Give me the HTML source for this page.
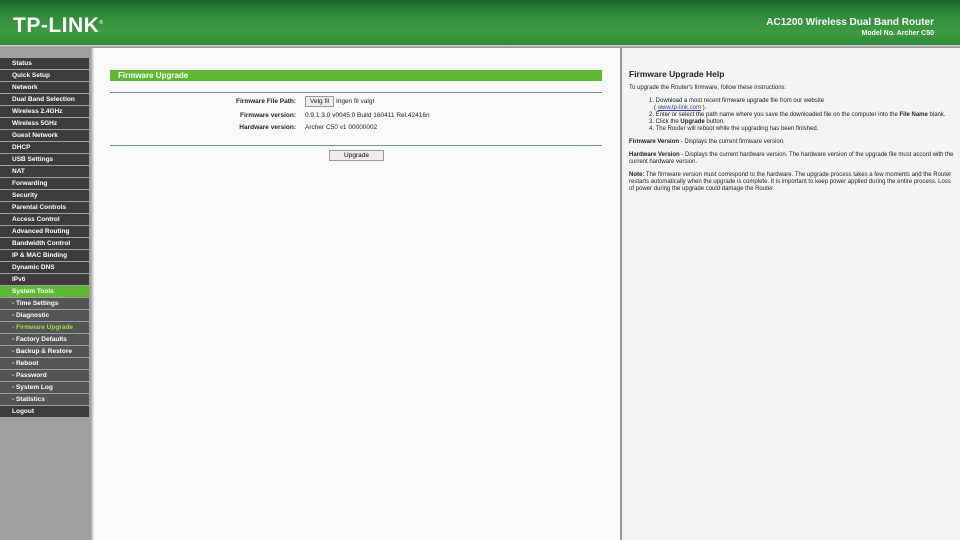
<!DOCTYPE html>
<html><head><meta charset="utf-8"><style>
*{margin:0;padding:0;box-sizing:border-box}
body{width:960px;height:540px;overflow:hidden;font-family:"Liberation Sans",Arial,sans-serif;background:#fff;position:relative}
#hd{position:absolute;left:0;top:0;width:960px;height:45px;background:linear-gradient(180deg,#1a6630 0%,#2f8a3a 30%,#3d9a40 70%,#2f8a38 100%)}
#hd .logo{position:absolute;left:13px;top:14px;color:#fff;font-weight:bold;font-size:21px;letter-spacing:0.5px}
#hd .t1{position:absolute;right:26px;top:17px;color:#fff;font-weight:bold;font-size:10px}
#hd .t2{position:absolute;right:26px;top:30px;color:#fff;font-weight:bold;font-size:7px}
#ln{position:absolute;left:0;top:45px;width:960px;height:3px;background:linear-gradient(#ddd,#888)}
#sb{position:absolute;left:0;top:48px;width:91px;height:492px;background:#a0a0a0}
#sb .m{position:absolute;left:0;width:89px;height:11px;background:#3c3c3c;color:#fff;font-size:6.5px;font-weight:bold;line-height:11px;padding-left:12px;white-space:nowrap}
#sb .s{background:#555}
#sb .a{background:#5fb832}
#sb .g{color:#a6d94a}
#vb1{position:absolute;left:91px;top:48px;width:3px;height:492px;background:linear-gradient(90deg,#aaa,#eee)}
#main{position:absolute;left:94px;top:48px;width:526px;height:492px;background:#fafafa}
#vb2{position:absolute;left:620px;top:48px;width:2px;height:492px;background:#999}
#help{position:absolute;left:622px;top:48px;width:338px;height:492px;background:#f2f5f1;font-size:6px;color:#222;padding:21px 6px 0 7px;line-height:7px}
.bar{position:absolute;left:16px;top:22px;width:492px;height:11px;background:#5fb832;color:#fff;font-weight:bold;font-size:8px;line-height:11px;padding-left:8px}
.hr{position:absolute;left:16px;width:492px;height:1px;background:#6a9a7a}
.lab{position:absolute;right:324px;font-size:6.5px;font-weight:bold;color:#222;white-space:nowrap}
.val{position:absolute;left:211px;font-size:6.5px;color:#222;white-space:nowrap}
.btn{display:inline-block;border:1px solid #999;background:#eee;font-size:6.5px;padding:1px 4px;border-radius:1px}
</style></head><body>
<div id="hd"><div class="logo">TP-LINK<sup style="font-size:5px">®</sup></div>
<div class="t1">AC1200 Wireless Dual Band Router</div><div class="t2">Model No. Archer C50</div></div>
<div id="ln"></div>
<div id="sb">
<div class="m" style="top:10px">Status</div>
<div class="m" style="top:22px">Quick Setup</div>
<div class="m" style="top:34px">Network</div>
<div class="m" style="top:46px">Dual Band Selection</div>
<div class="m" style="top:58px">Wireless 2.4GHz</div>
<div class="m" style="top:70px">Wireless 5GHz</div>
<div class="m" style="top:82px">Guest Network</div>
<div class="m" style="top:94px">DHCP</div>
<div class="m" style="top:106px">USB Settings</div>
<div class="m" style="top:118px">NAT</div>
<div class="m" style="top:130px">Forwarding</div>
<div class="m" style="top:142px">Security</div>
<div class="m" style="top:154px">Parental Controls</div>
<div class="m" style="top:166px">Access Control</div>
<div class="m" style="top:178px">Advanced Routing</div>
<div class="m" style="top:190px">Bandwidth Control</div>
<div class="m" style="top:202px">IP &amp; MAC Binding</div>
<div class="m" style="top:214px">Dynamic DNS</div>
<div class="m" style="top:226px">IPv6</div>
<div class="m a" style="top:238px">System Tools</div>
<div class="m s" style="top:250px">- Time Settings</div>
<div class="m s" style="top:262px">- Diagnostic</div>
<div class="m s g" style="top:274px">- Firmware Upgrade</div>
<div class="m s" style="top:286px">- Factory Defaults</div>
<div class="m s" style="top:298px">- Backup &amp; Restore</div>
<div class="m s" style="top:310px">- Reboot</div>
<div class="m s" style="top:322px">- Password</div>
<div class="m s" style="top:334px">- System Log</div>
<div class="m s" style="top:346px">- Statistics</div>
<div class="m" style="top:358px">Logout</div>
</div>
<div id="vb1"></div>
<div id="main">
<div class="bar">Firmware Upgrade</div>
<div class="hr" style="top:44px"></div>
<div class="lab" style="top:50px">Firmware File Path:</div>
<div class="val" style="top:48px"><span class="btn">Velg fil</span> Ingen fil valgt</div>
<div class="lab" style="top:64px">Firmware version:</div>
<div class="val" style="top:64px">0.9.1 3.0 v0045.0 Build 160411 Rel.42416n</div>
<div class="lab" style="top:76px">Hardware version:</div>
<div class="val" style="top:76px">Archer C50 v1 00000002</div>
<div class="hr" style="top:97px"></div>
<div style="position:absolute;left:235px;top:102px;width:55px;height:11px;border:1px solid #999;background:#eee;font-size:6.5px;text-align:center;line-height:9px">Upgrade</div>
</div>
<div id="vb2"></div>
<div id="help">
<div style="font-size:8.5px;font-weight:bold;margin:2px 0 7px">Firmware Upgrade Help</div>
<div style="margin-bottom:6px">To upgrade the Router's firmware, follow these instructions:</div>
<div style="padding-left:20px;margin-bottom:6px;white-space:nowrap">1. Download a most recent firmware upgrade file from our website<br>&nbsp;&nbsp;&nbsp;( <span style="color:#3a3aa0;text-decoration:underline">www.tp-link.com</span> ).<br>2. Enter or select the path name where you save the downloaded file on the computer into the <b>File Name</b> blank.<br>3. Click the <b>Upgrade</b> button.<br>4. The Router will reboot while the upgrading has been finished.</div>
<div style="margin-bottom:6px"><b>Firmware Version</b> - Displays the current firmware version.</div>
<div style="margin-bottom:6px"><b>Hardware Version</b> - Displays the current hardware version. The hardware version of the upgrade file must accord with the current hardware version.</div>
<div><b>Note:</b> The firmware version must correspond to the hardware. The upgrade process takes a few moments and the Router restarts automatically when the upgrade is complete. It is important to keep power applied during the entire process. Loss of power during the upgrade could damage the Router.</div>
</div>
</body></html>
